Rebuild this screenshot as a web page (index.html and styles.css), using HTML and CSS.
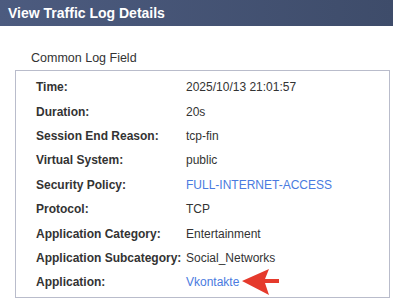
FILE: index.html
```html
<!DOCTYPE html>
<html lang="en">

<head>
    <meta charset="UTF-8">
    <meta name="viewport" content="width=device-width, initial-scale=1.0">
    <title>View Traffic Log Details</title>
    <link rel="stylesheet" href="styles.css">
</head>

<body>
    <div class="header">View Traffic Log Details</div>
    <div class="content">
        <div class="section-title">Common Log Field</div>
        <div class="panel">
            <div class="fields">
                <div class="label">Time:</div><div>2025/10/13 21:01:57</div>
                <div class="label">Duration:</div><div>20s</div>
                <div class="label">Session End Reason:</div><div>tcp-fin</div>
                <div class="label">Virtual System:</div><div>public</div>
                <div class="label">Security Policy:</div><div><a href="#">FULL-INTERNET-ACCESS</a></div>
                <div class="label">Protocol:</div><div>TCP</div>
                <div class="label">Application Category:</div><div>Entertainment</div>
                <div class="label">Application Subcategory:</div><div>Social_Networks</div>
                <div class="label">Application:</div>
                <div class="app">
                    <a href="#">Vkontakte</a>
                    <svg class="arrow" width="40" height="30" viewBox="0 0 40 30">
                        <polygon points="1,14 28,2 24,12 38,12 38,16 24,16 28,28" fill="#e53a2c" />
                    </svg>
                </div>
            </div>
        </div>
    </div>
</body>

</html>
```

FILE: styles.css
```css
body {
    margin: 0;
    font-family: "Liberation Sans", Arial, sans-serif;
    font-size: 12px;
    color: #333;
    background: #fff;
}

.header {
    height: 26px;
    line-height: 26px;
    padding-left: 8px;
    font-size: 14px;
    font-weight: bold;
    color: #fff;
    background: linear-gradient(to right, #4c5b7f, #3e4c6a);
}

.content {
    padding: 24px 3px 0 15px;
}

.section-title {
    margin-left: 16px;
    font-size: 12.5px;
    color: #333;
    line-height: 16px;
    padding-bottom: 4px;
}

.panel {
    border: 1px solid #b9bccb;
    padding: 4px 0 2px 20px;
}

.fields {
    display: grid;
    grid-template-columns: 150px auto;
    grid-auto-rows: 24.4px;
    align-items: center;
    white-space: nowrap;
}

.fields .label {
    font-weight: bold;
}

.fields a {
    color: #4a7be0;
    text-decoration: none;
}

.app {
    display: flex;
    align-items: center;
    gap: 2px;
}
```
